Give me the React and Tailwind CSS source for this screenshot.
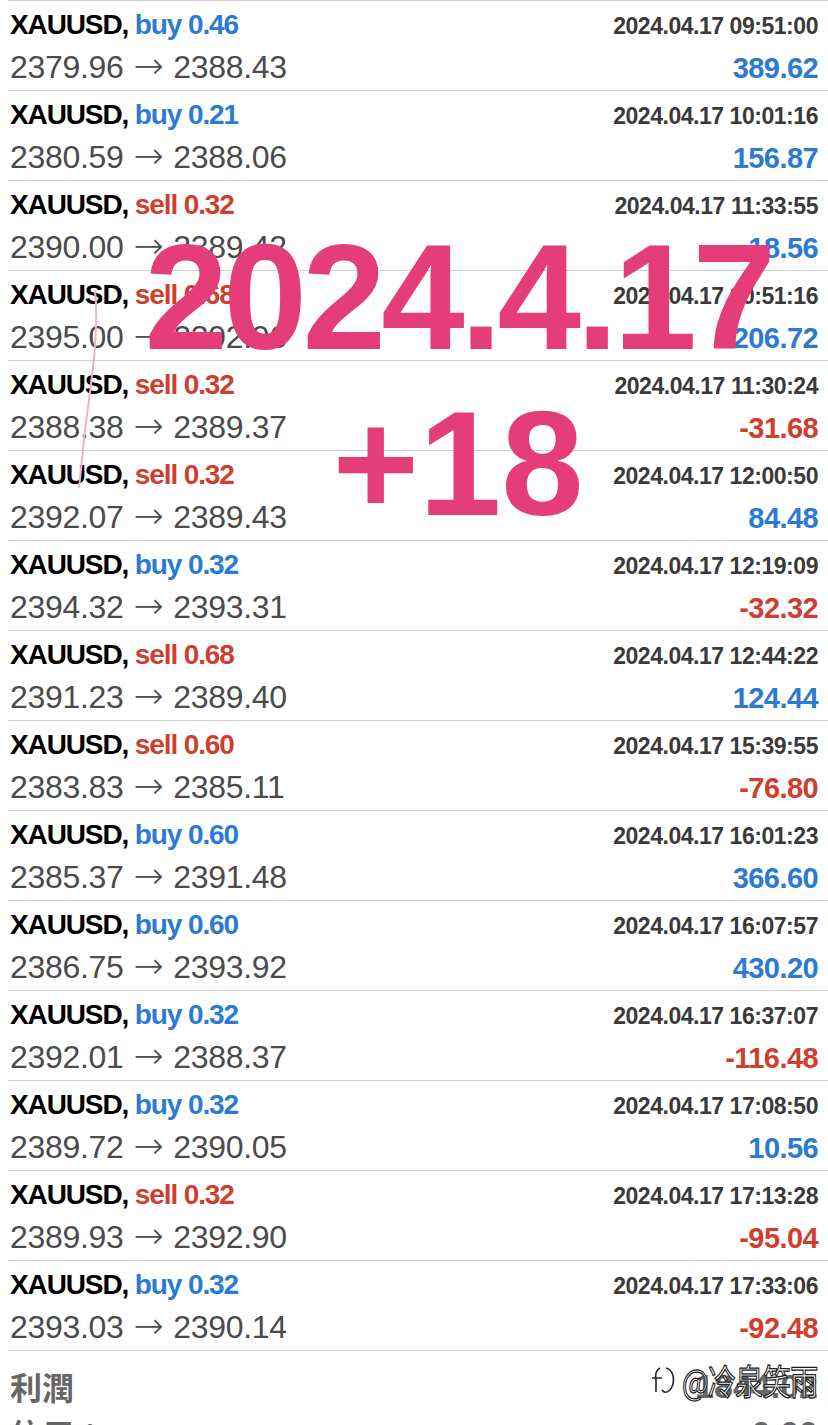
import React from 'react';

const trades = [
  ['buy', '0.46', '2379.96', '2388.43', '2024.04.17 09:51:00', '389.62'],
  ['buy', '0.21', '2380.59', '2388.06', '2024.04.17 10:01:16', '156.87'],
  ['sell', '0.32', '2390.00', '2389.42', '2024.04.17 11:33:55', '18.56'],
  ['sell', '0.68', '2395.00', '2392.96', '2024.04.17 10:51:16', '206.72'],
  ['sell', '0.32', '2388.38', '2389.37', '2024.04.17 11:30:24', '-31.68'],
  ['sell', '0.32', '2392.07', '2389.43', '2024.04.17 12:00:50', '84.48'],
  ['buy', '0.32', '2394.32', '2393.31', '2024.04.17 12:19:09', '-32.32'],
  ['sell', '0.68', '2391.23', '2389.40', '2024.04.17 12:44:22', '124.44'],
  ['sell', '0.60', '2383.83', '2385.11', '2024.04.17 15:39:55', '-76.80'],
  ['buy', '0.60', '2385.37', '2391.48', '2024.04.17 16:01:23', '366.60'],
  ['buy', '0.60', '2386.75', '2393.92', '2024.04.17 16:07:57', '430.20'],
  ['buy', '0.32', '2392.01', '2388.37', '2024.04.17 16:37:07', '-116.48'],
  ['buy', '0.32', '2389.72', '2390.05', '2024.04.17 17:08:50', '10.56'],
  ['sell', '0.32', '2389.93', '2392.90', '2024.04.17 17:13:28', '-95.04'],
  ['buy', '0.32', '2393.03', '2390.14', '2024.04.17 17:33:06', '-92.48'],
];

const Row = ({ t }) => {
  const [side, lots, open, close, time, profit] = t;
  const sideColor = side === 'buy' ? 'text-[#2b7bd3]' : 'text-[#cf3f30]';
  const profitColor = profit.startsWith('-') ? 'text-[#cf3f30]' : 'text-[#2b7bd3]';
  return (
    <div className="h-[90px] ml-[8px] pl-[2px] pr-[10px] border-t border-[#cfcfcf] flex flex-col">
      <div className="flex items-baseline justify-between h-[41px] pt-[10px] leading-[28px]">
        <span className="text-[28px] font-bold tracking-[-0.04em]">
          <span className="text-black">XAUUSD, </span>
          <span className={sideColor}>
            {side} {lots}
          </span>
        </span>
        <span className="text-[23px] font-bold text-[#3a3a3a] tracking-[-0.02em]">{time}</span>
      </div>
      <div className="flex items-baseline justify-between pt-[9px] leading-[30px]">
        <span className="text-[32px] text-[#4b4b4b] tracking-[-0.01em]">
          {open}
          <span className="font-['DejaVu_Sans',sans-serif] text-[36px] leading-[30px] font-light mx-[10px]">→</span>
          {close}
        </span>
        <span className={`text-[29px] font-bold tracking-[-0.02em] ${profitColor}`}>{profit}</span>
      </div>
    </div>
  );
};

const App = () => {
  return (
    <div className="relative w-[828px] h-[1425px] overflow-hidden bg-white font-['Liberation_Sans',sans-serif]">
      <div className="flex flex-col">
        {trades.map((t, i) => (
          <Row key={i} t={t} />
        ))}
        <div className="ml-[8px] pl-[2px] pr-[10px] border-t border-[#cfcfcf] font-['Noto_Sans_CJK_TC',sans-serif] text-[#666]">
          <div className="flex items-center justify-between h-[62px] pt-[8px]">
            <span className="text-[32px] font-bold leading-none">利潤</span>
            <span className="text-[34px] font-bold leading-none font-['Liberation_Sans',sans-serif]">1844.02</span>
          </div>
          <div className="flex items-center justify-between h-[40px]">
            <span className="text-[32px] font-bold leading-none">信用：</span>
            <span className="text-[34px] font-bold leading-none font-['Liberation_Sans',sans-serif]">0.00</span>
          </div>
        </div>
      </div>

      {/* pink scribble */}
      <svg className="absolute left-0 top-0 pointer-events-none" width="828" height="600">
        <path d="M95 290 C 100 340, 88 400, 84 440 S 80 480, 79 488" stroke="#f2b3c8" strokeWidth="2" fill="none" />
      </svg>

      {/* date stamp */}
      <div className="absolute left-[0px] top-[222px] w-[916px] flex flex-col items-center text-[#e53d79] font-bold pointer-events-none">
        <span className="text-[150px] leading-[150px] tracking-[-0.03em]">2024.4.17</span>
        <span className="text-[148px] leading-[148px] mt-[18px]">+18</span>
      </div>

      {/* watermark */}
      <div className="absolute left-[648px] top-[1362px] flex items-center gap-[4px] text-white font-['Noto_Sans_CJK_SC',sans-serif] [-webkit-text-stroke:1px_#222] pointer-events-none">
        <svg width="30" height="36" viewBox="0 0 30 36" fill="none" stroke="#222" strokeWidth="1.6">
          <path d="M12 6 C 8 8, 7 12, 8 18 L 8 30 M4 16 L 14 16" />
          <path d="M18 6 C 26 8, 28 20, 22 28 C 19 31, 16 31, 14 28" />
        </svg>
        <span className="text-[28px] leading-none scale-y-125 tracking-[-0.02em]">@冷泉笑雨</span>
      </div>
    </div>
  );
};

export default App;
